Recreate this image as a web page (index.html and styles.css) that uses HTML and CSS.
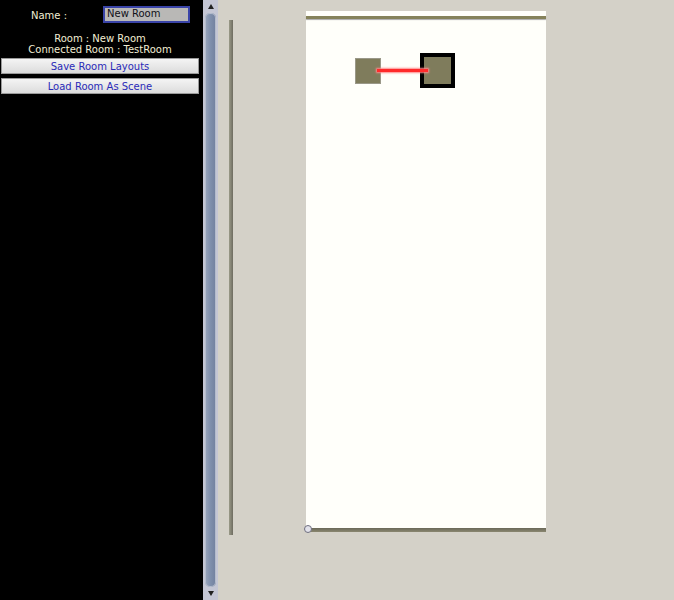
FILE: index.html
```html
<!DOCTYPE html>
<html>
<head>
<meta charset="utf-8">
<link rel="stylesheet" href="styles.css">
</head>
<body>
<div class="app">
  <div class="sidebar">
    <div class="name-row">
      <span class="name-label">Name :</span>
      <input class="name-input" type="text" value="New Room">
    </div>
    <div class="info">
      <div>Room : New Room</div>
      <div>Connected Room : TestRoom</div>
    </div>
    <button class="btn">Save Room Layouts</button>
    <button class="btn">Load Room As Scene</button>
  </div>
  <div class="scrollbar">
    <div class="arrow up"></div>
    <div class="thumb"></div>
    <div class="arrow down"></div>
  </div>
  <div class="workspace">
    <div class="vline"></div>
    <div class="canvas">
      <div class="canvas-top"></div>
      <div class="canvas-body">
        <div class="node small"></div>
        <div class="node big"></div>
        <div class="link"></div>
      </div>
      <div class="canvas-bottom"><span class="handle"></span></div>
    </div>
  </div>
</div>
</body>
</html>
```
FILE: styles.css
```css
html, body {
  margin: 0;
  padding: 0;
}
body {
  width: 674px;
  height: 600px;
  overflow: hidden;
  background: #d4d1c8;
  font-family: "DejaVu Sans", Verdana, sans-serif;
  font-size: 10px;
}
.app {
  display: flex;
  height: 600px;
}
.sidebar {
  width: 203px;
  background: #000;
  color: #f2eed4;
  display: flex;
  flex-direction: column;
  flex-shrink: 0;
}
.name-row {
  display: flex;
  align-items: center;
  height: 17px;
  margin-top: 6px;
}
.name-label {
  margin-left: 31px;
  width: 72px;
  padding-top: 2px;
}
.name-input {
  box-sizing: border-box;
  width: 87px;
  height: 17px;
  margin: 0;
  padding: 0 0 2px 2px;
  border: 2px solid #3a44a8;
  background: #b9b8b6;
  color: #101018;
  font-family: "DejaVu Sans", Verdana, sans-serif;
  font-size: 10px;
  outline: none;
}
.info {
  margin-top: 10px;
  text-align: center;
  line-height: 11px;
  margin-left: -3px;
}
.btn {
  box-sizing: border-box;
  width: 198px;
  height: 16px;
  margin: 3px 0 0 1px;
  padding: 0;
  border: 1px solid #9a9a9a;
  background: linear-gradient(#f4f4f4, #dcdcdc);
  color: #2a2ab8;
  font-family: "DejaVu Sans", Verdana, sans-serif;
  font-size: 10px;
  line-height: 13px;
}
.btn + .btn {
  margin-top: 4px;
}
.scrollbar {
  width: 15px;
  flex-shrink: 0;
  background: #c4c6d4;
  display: flex;
  flex-direction: column;
  align-items: center;
  box-sizing: border-box;
  padding: 2px 0;
}
.arrow {
  width: 0;
  height: 0;
  border-left: 3px solid transparent;
  border-right: 3px solid transparent;
  margin: 2px 0;
}
.arrow.up {
  border-bottom: 5px solid #222;
}
.arrow.down {
  border-top: 5px solid #222;
}
.thumb {
  flex: 1;
  width: 11px;
  margin: 2px 0;
  border-radius: 5px;
  background: linear-gradient(90deg, #9aa6bc, #7f8fac 50%, #72809e);
  box-shadow: inset 0 0 0 1px #b4bccc;
}
.workspace {
  flex: 1;
  display: flex;
  align-items: flex-start;
}
.vline {
  width: 4px;
  height: 515px;
  margin: 20px 0 0 11px;
  background: linear-gradient(90deg, #9a9a88, #6e6c60);
}
.canvas {
  margin: 11px 0 0 73px;
  width: 240px;
  background: #fffffa;
  display: flex;
  flex-direction: column;
}
.canvas-top {
  height: 3px;
  margin-top: 5px;
  background: #85825a;
  box-shadow: 0 1px 1px #aaa;
}
.canvas-body {
  position: relative;
  height: 509px;
}
.canvas-bottom {
  position: relative;
  height: 4px;
  background: linear-gradient(#6a6858, #8a8770);
}
.handle {
  position: absolute;
  left: -2px;
  top: -3px;
  width: 8px;
  height: 8px;
  box-sizing: border-box;
  border-radius: 50%;
  border: 1px solid #6e6e7e;
  background: #e2e2ea;
}
.node {
  position: absolute;
  box-sizing: border-box;
  background: #7f7c5c;
}
.node.small {
  left: 49px;
  top: 39px;
  width: 26px;
  height: 26px;
  border: 1px solid #9a9888;
}
.node.big {
  left: 114px;
  top: 34px;
  width: 35px;
  height: 35px;
  border: 4px solid #000;
}
.link {
  position: absolute;
  left: 71px;
  top: 50px;
  width: 51px;
  height: 3px;
  background: #ff2a2a;
  box-shadow: 0 0 2px 1px #ff8888;
}
```
